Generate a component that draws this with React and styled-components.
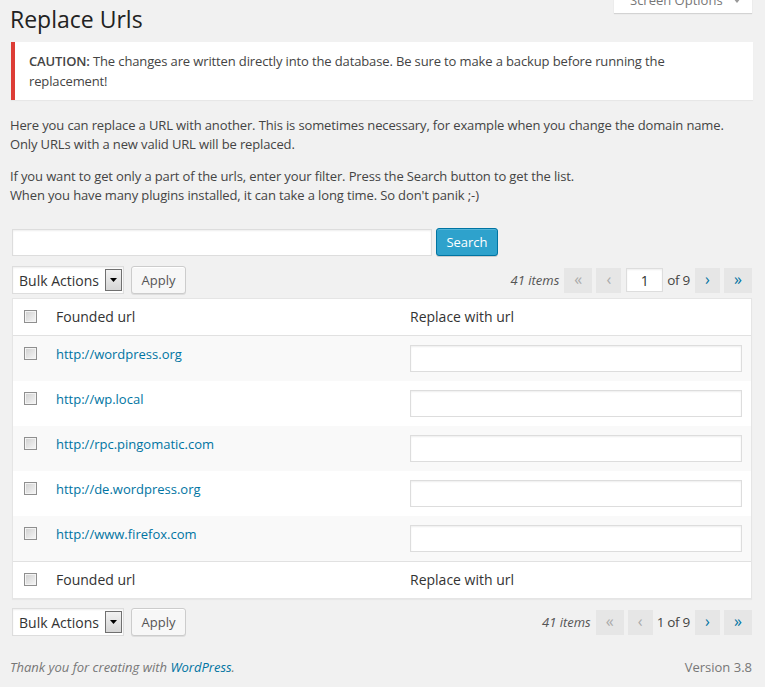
import React from 'react'
import styled, { createGlobalStyle } from 'styled-components'

const GlobalStyle = createGlobalStyle`
  html, body {
    margin: 0;
    padding: 0;
    background: #f1f1f1;
  }
  body {
    font-family: "Open Sans", "Liberation Sans", sans-serif;
    font-size: 13px;
    line-height: 1.5;
    color: #444;
  }
  * { box-sizing: border-box; }
`

const Wrap = styled.div`
  padding: 0 12px 0 10px;
`

const Header = styled.div`
  display: flex;
  justify-content: space-between;
  align-items: flex-start;
`

const Title = styled.h2`
  margin: 5px 0 0;
  font-size: 23px;
  font-weight: 400;
  line-height: 29px;
  color: #222;
`

const ScreenTab = styled.div`
  margin-top: -12px;
  margin-right: 1px;
  width: 138px;
  height: 25px;
  background: #fff;
  box-shadow: 0 1px 1px rgba(0, 0, 0, 0.12);
  display: flex;
  align-items: center;
  padding-left: 16px;
  color: #777;
  font-size: 13px;
  gap: 10px;
`

const Notice = styled.div`
  margin: 8px 0 0 1px;
  background: #fff;
  border-left: 4px solid #dd3d36;
  box-shadow: 0 1px 1px rgba(0, 0, 0, 0.04);
  padding: 10px 24px 9px 14px;
  line-height: 19.5px;
  letter-spacing: -0.13px;
`

const Strong = styled.strong`
  font-weight: 600;
`

const Text = styled.p`
  margin: ${p => p.$top || 13}px 0 0;
  line-height: 18.5px;
  letter-spacing: -0.13px;
`

const SearchRow = styled.div`
  display: flex;
  align-items: center;
  gap: 4px;
  margin: 24px 0 0 2px;
`

const TextInput = styled.input`
  width: ${p => p.$w}px;
  height: ${p => p.$h || 27}px;
  border: 1px solid #ddd;
  background: #fff;
  box-shadow: inset 0 1px 2px rgba(0, 0, 0, 0.07);
  font-family: inherit;
  font-size: 14px;
  color: #333;
  text-align: ${p => p.$center ? 'center' : 'left'};
  padding: 0 4px;
  margin-left: ${p => p.$ml || 0}px;
  outline: none;
`

const PrimaryButton = styled.button`
  height: 28px;
  width: 62px;
  background: #2ea2cc;
  border: 1px solid #0074a2;
  border-radius: 3px;
  box-shadow: inset 0 1px 0 rgba(120, 200, 230, 0.5), 0 1px 0 rgba(0, 0, 0, 0.15);
  color: #fff;
  font-family: inherit;
  font-size: 13px;
  padding: 0;
`

const Tablenav = styled.div`
  display: flex;
  justify-content: space-between;
  align-items: center;
  height: 28px;
  margin: ${p => p.$top}px 1px 0 2px;
`

const Actions = styled.div`
  display: flex;
  align-items: center;
  gap: 7px;
`

const Select = styled.div`
  width: 112px;
  height: 28px;
  background: #fff;
  border: 1px solid #ddd;
  box-shadow: inset 0 1px 2px rgba(0, 0, 0, 0.07);
  display: flex;
  align-items: center;
  padding-left: 6px;
  font-size: 14px;
  color: #333;
`

const SelectArrow = styled.span`
  margin-left: auto;
  margin-right: 1px;
  width: 17px;
  height: 22px;
  border: 1px solid #707070;
  background: linear-gradient(#f2f2f2, #d6d6d6);
  display: flex;
  align-items: center;
  justify-content: center;
`

const Button = styled.button`
  height: 28px;
  width: 55px;
  background: #f7f7f7;
  border: 1px solid #ccc;
  border-radius: 3px;
  box-shadow: inset 0 1px 0 #fff, 0 1px 0 rgba(0, 0, 0, 0.08);
  color: #555;
  font-family: inherit;
  font-size: 13px;
  padding: 0;
`

const Pages = styled.div`
  display: flex;
  align-items: center;
  gap: 4px;
`

const Count = styled.span`
  font-style: italic;
  color: #555;
  margin-right: 1px;
  padding-top: 2px;
`

const PageLink = styled.span`
  width: ${p => p.$w}px;
  height: 25px;
  background: #e6e6e6;
  color: ${p => p.$disabled ? '#aaa' : '#0074a2'};
  display: flex;
  align-items: center;
  justify-content: center;
  font-size: 16px;
  line-height: 1;
  padding-bottom: 3px;
  margin-left: ${p => p.$ml || 0}px;
`

const PageText = styled.span`
  color: #444;
  font-size: 13.5px;
  letter-spacing: -0.3px;
  margin-left: ${p => p.$ml || 0}px;
`

const Table = styled.table`
  width: 740px;
  margin: 4px 0 0 2px;
  border: 1px solid #e5e5e5;
  border-spacing: 0;
  background: #fff;
  box-shadow: 0 1px 1px rgba(0, 0, 0, 0.04);
  table-layout: fixed;
`

const HeadCell = styled.th`
  text-align: left;
  font-weight: 400;
  font-size: 14px;
  color: #333;
  padding: 8px 10px;
  line-height: 20px;
  border-${p => p.$foot ? 'top' : 'bottom'}: 1px solid #e1e1e1;
`

const CheckCell = styled.td`
  padding: 11px 0 0 11px;
  vertical-align: top;
  border-${p => p.$foot ? 'top' : 'bottom'}: ${p => p.$head ? '1px solid #e1e1e1' : '0'};
`

const Row = styled.tr`
  background: ${p => p.$alt ? '#f9f9f9' : '#fff'};
`

const Cell = styled.td`
  padding: 9px 9px 9px 10px;
  vertical-align: top;
  line-height: 19.5px;
`

const Link = styled.a`
  color: #0074a2;
  text-decoration: none;
`

const Checkbox = styled.span`
  display: block;
  width: 13px;
  height: 13px;
  border: 1px solid #8f8f8f;
  box-shadow: inset 0 0 0 1px #f4f4f4;
  background: linear-gradient(135deg, #cfcfcf, #f7f7f7);
`

const Footer = styled.div`
  display: flex;
  justify-content: space-between;
  margin: 22px 1px 0 0;
  color: #777;
  padding-bottom: 10px;
`

const Thanks = styled.span`
  font-style: italic;
`

const urls = [
  'http://wordpress.org',
  'http://wp.local',
  'http://rpc.pingomatic.com',
  'http://de.wordpress.org',
  'http://www.firefox.com',
]

const Nav = ({ top }) => (
  <Tablenav $top={top ? 10 : 9}>
    <Actions>
      <Select>
        Bulk Actions
        <SelectArrow>
          <svg width="7" height="4" viewBox="0 0 7 4"><path d="M0 0h7L3.5 4z" fill="#000" /></svg>
        </SelectArrow>
      </Select>
      <Button>Apply</Button>
    </Actions>
    <Pages>
      <Count>41 items</Count>
      <PageLink $w={28} $disabled>«</PageLink>
      <PageLink $w={25} $disabled>‹</PageLink>
      {top ? (
        <>
          <TextInput $w={37} $h={24} $center $ml={1} defaultValue="1" />
          <PageText>of 9</PageText>
        </>
      ) : (
        <PageText>1 of 9</PageText>
      )}
      <PageLink $w={25} $ml={1}>›</PageLink>
      <PageLink $w={28}>»</PageLink>
    </Pages>
  </Tablenav>
)

const HeadRow = ({ foot }) => (
  <tr>
    <CheckCell as="th" $head $foot={foot}><Checkbox /></CheckCell>
    <HeadCell $foot={foot}>Founded url</HeadCell>
    <HeadCell $foot={foot}>Replace with url</HeadCell>
  </tr>
)

export default function App() {
  return (
    <Wrap>
      <GlobalStyle />
      <Header>
        <Title>Replace Urls</Title>
        <ScreenTab>
          Screen Options
          <svg width="8" height="5" viewBox="0 0 8 5"><path d="M0 0h8L4 5z" fill="#999" /></svg>
        </ScreenTab>
      </Header>
      <Notice>
        <Strong>CAUTION:</Strong> The changes are written directly into the database. Be sure to make a backup before running the replacement!
      </Notice>
      <Text $top={16}>
        Here you can replace a URL with another. This is sometimes necessary, for example when you change the domain name.<br />
        Only URLs with a new valid URL will be replaced.
      </Text>
      <Text $top={14}>
        If you want to get only a part of the urls, enter your filter. Press the Search button to get the list.<br />
        When you have many plugins installed, it can take a long time. So don't panik ;-)
      </Text>
      <SearchRow>
        <TextInput $w={420} />
        <PrimaryButton>Search</PrimaryButton>
      </SearchRow>
      <Nav top />
      <Table>
        <colgroup>
          <col style={{ width: 33 }} />
          <col style={{ width: 354 }} />
          <col />
        </colgroup>
        <thead>
          <HeadRow />
        </thead>
        <tbody>
          {urls.map((u, i) => (
            <Row key={u} $alt={i % 2 === 0}>
              <CheckCell><Checkbox /></CheckCell>
              <Cell><Link href="#">{u}</Link></Cell>
              <Cell><TextInput $w={332} /></Cell>
            </Row>
          ))}
        </tbody>
        <tfoot>
          <HeadRow foot />
        </tfoot>
      </Table>
      <Nav />
      <Footer>
        <Thanks>Thank you for creating with <Link href="#">WordPress</Link>.</Thanks>
        <span>Version 3.8</span>
      </Footer>
    </Wrap>
  )
}
